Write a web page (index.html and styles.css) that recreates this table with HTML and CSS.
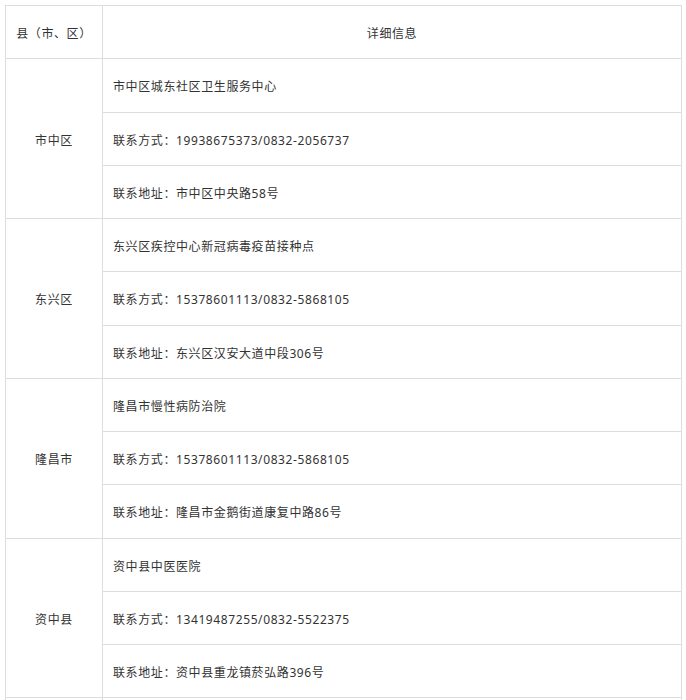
FILE: index.html
```html
<!DOCTYPE html>
<html lang="zh-CN">
<head>
<meta charset="utf-8">
<link rel="stylesheet" href="styles.css">
</head>
<body>
<table class="info-table">
  <thead>
    <tr><th class="col-county">县（市、区）</th><th class="col-detail">详细信息</th></tr>
  </thead>
  <tbody>
    <tr><td class="county" rowspan="3">市中区</td><td>市中区城东社区卫生服务中心</td></tr>
    <tr><td>联系方式：19938675373/0832-2056737</td></tr>
    <tr><td>联系地址：市中区中央路58号</td></tr>
    <tr><td class="county" rowspan="3">东兴区</td><td>东兴区疾控中心新冠病毒疫苗接种点</td></tr>
    <tr><td>联系方式：15378601113/0832-5868105</td></tr>
    <tr><td>联系地址：东兴区汉安大道中段306号</td></tr>
    <tr><td class="county" rowspan="3">隆昌市</td><td>隆昌市慢性病防治院</td></tr>
    <tr><td>联系方式：15378601113/0832-5868105</td></tr>
    <tr><td>联系地址：隆昌市金鹅街道康复中路86号</td></tr>
    <tr><td class="county" rowspan="3">资中县</td><td>资中县中医医院</td></tr>
    <tr><td>联系方式：13419487255/0832-5522375</td></tr>
    <tr><td>联系地址：资中县重龙镇菸弘路396号</td></tr>
    <tr><td class="county" rowspan="3"></td><td></td></tr>
    <tr><td></td></tr>
    <tr><td></td></tr>
  </tbody>
</table>
</body>
</html>
```
FILE: styles.css
```css
html, body {
  margin: 0;
  padding: 0;
  background: #ffffff;
}
body {
  padding: 5px 0 0 5px;
  font-family: "Noto Sans", "Noto Sans CJK SC", sans-serif;
  font-size: 12px;
  letter-spacing: 0.6px;
  color: #333333;
  overflow: hidden;
  height: 700px;
  box-sizing: border-box;
}
.info-table {
  border-collapse: collapse;
  width: 677px;
  table-layout: fixed;
}
.col-county {
  width: 97px;
}
.info-table th,
.info-table td {
  border: 1px solid #dddddd;
  height: 53.25px;
  padding: 4px 10px 0;
  vertical-align: middle;
  font-weight: normal;
  line-height: 20px;
  box-sizing: border-box;
}
.info-table th {
  text-align: center;
}
.info-table td {
  text-align: left;
}
.info-table td.county {
  text-align: center;
  padding: 4px 0 0;
}
```
